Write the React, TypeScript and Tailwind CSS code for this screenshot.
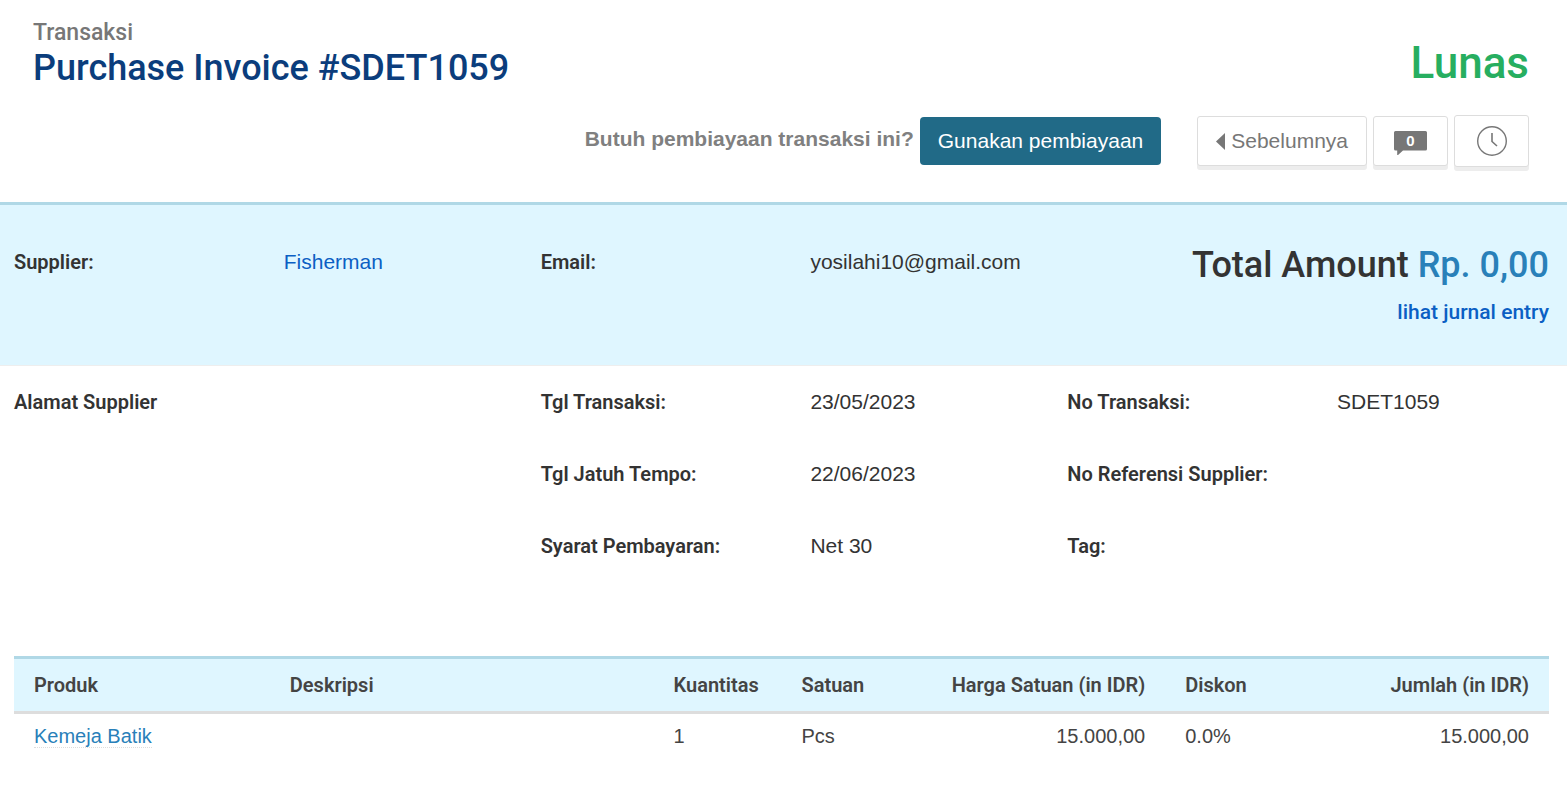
import type { ReactNode } from 'react'

const details = [
  [{ label: 'Alamat Supplier', value: '' }],
  [
    { label: 'Tgl Transaksi:', value: '23/05/2023' },
    { label: 'Tgl Jatuh Tempo:', value: '22/06/2023' },
    { label: 'Syarat Pembayaran:', value: 'Net 30' }
  ],
  [
    { label: 'No Transaksi:', value: 'SDET1059' },
    { label: 'No Referensi Supplier:', value: '' },
    { label: 'Tag:', value: '' }
  ]
]

const items = [
  {
    product: 'Kemeja Batik',
    description: '',
    quantity: '1',
    unit: 'Pcs',
    price: '15.000,00',
    discount: '0.0%',
    amount: '15.000,00'
  }
]

function Field({ label, children }: { label: string; children?: ReactNode }) {
  return (
    <div className="flex h-[72px] leading-[30px]">
      <dt className="w-[56%] shrink-0 font-['Roboto',sans-serif] text-[20px] font-semibold">{label}</dt>
      <dd className="whitespace-nowrap">{children}</dd>
    </div>
  )
}

function CommentIcon() {
  return (
    <svg width="33" height="28" viewBox="0 -4 33 28" fill="#777" aria-hidden="true">
      <path d="M1.5 0h30A1.5 1.5 0 0 1 33 1.5v16.5a1.5 1.5 0 0 1-1.5 1.5H9L4 24h-.8v-4.5H1.5A1.5 1.5 0 0 1 0 18V1.5A1.5 1.5 0 0 1 1.5 0Z" />
      <text
        x="16.5"
        y="15"
        textAnchor="middle"
        fill="#fff"
        fontSize="15"
        fontWeight="700"
        fontFamily="Liberation Sans, sans-serif"
      >
        0
      </text>
    </svg>
  )
}

function ClockIcon() {
  return (
    <svg width="30" height="30" viewBox="0 0 30 30" fill="none" stroke="#777" aria-hidden="true">
      <circle cx="15" cy="15" r="14.3" strokeWidth="1.4" />
      <path d="M15 7v8.5l5 4.5" strokeWidth="1.6" />
    </svg>
  )
}

const toolButton =
  'flex items-center justify-center rounded-[3px] border border-[#ddd] bg-white text-[#777] shadow-[0_4px_0_#ededed]'

export default function App() {
  return (
    <main className="font-['Liberation_Sans',Arial,sans-serif] text-[21px] text-[#333]">
      <header className="pt-5 pr-[38px] pb-[35px] pl-[33px]">
        <div className="flex items-start justify-between font-['Roboto',sans-serif] font-medium">
          <div>
            <p className="text-[23px] leading-[26px] text-[#777]">Transaksi</p>
            <h1 className="text-[36px] leading-[44px] text-[#0b3d7c]">Purchase Invoice #SDET1059</h1>
          </div>
          <p className="pt-4 text-[44px] leading-[54px] text-[#27ae60]">Lunas</p>
        </div>
        <div className="mt-[25px] flex items-center justify-end">
          <p className="mr-[6px] pb-1 font-bold text-[#808080]">Butuh pembiayaan transaksi ini?</p>
          <button type="button" className="h-12 rounded bg-[#216a87] px-[18px] text-white">
            Gunakan pembiayaan
          </button>
          <div className="ml-9 flex items-center gap-[6px]">
            <button type="button" className={`${toolButton} h-[50px] gap-[6px] px-[18px]`}>
              <svg width="9" height="17" viewBox="0 0 9 17" fill="#777" aria-hidden="true">
                <path d="M9 0v17L0 8.5Z" />
              </svg>
              Sebelumnya
            </button>
            <button type="button" aria-label="Komentar" className={`${toolButton} h-[50px] w-[75px]`}>
              <CommentIcon />
            </button>
            <button type="button" aria-label="Riwayat" className={`${toolButton} h-[52px] w-[75px]`}>
              <ClockIcon />
            </button>
          </div>
        </div>
      </header>

      <section className="border-t-3 border-b border-t-[#b0d8e6] border-b-[#eee] bg-[#dff6ff] pt-[42px] pr-[18px] pb-[38px] pl-[14px]">
        <div className="grid grid-cols-3 gap-x-[45px]">
          <dl>
            <Field label="Supplier:">
              <a href="#" className="text-[#0b5fc4]">Fisherman</a>
            </Field>
          </dl>
          <dl>
            <Field label="Email:">yosilahi10@gmail.com</Field>
          </dl>
          <div className="text-right font-['Roboto',sans-serif] font-medium">
            <h2 className="text-[36px] leading-[36px]">
              Total Amount <span className="text-[#2980b9]">Rp. 0,00</span>
            </h2>
            <a href="#" className="mt-[14px] block leading-[30px] text-[#0b5fc4]">lihat jurnal entry</a>
          </div>
        </div>
      </section>

      <section className="pt-[21px] pr-[18px] pl-[14px]">
        <div className="grid grid-cols-3 gap-x-[45px]">
          {details.map((column, index) => (
            <dl key={index}>
              {column.map((field) => (
                <Field key={field.label} label={field.label}>{field.value}</Field>
              ))}
            </dl>
          ))}
        </div>

        <table className="mt-[53px] w-full table-fixed text-left text-[20px] text-[#444]">
          <thead className="border-t-3 border-b-3 border-t-[#b0d8e6] border-b-[#ddd] bg-[#dff6ff] font-['Roboto',sans-serif]">
            <tr className="h-[55px] *:px-5 *:font-semibold *:whitespace-nowrap">
              <th className="w-2/12">Produk</th>
              <th className="w-3/12">Deskripsi</th>
              <th className="w-1/12">Kuantitas</th>
              <th className="w-1/12">Satuan</th>
              <th className="w-2/12 text-right">Harga Satuan (in IDR)</th>
              <th className="w-1/12">Diskon</th>
              <th className="w-2/12 text-right">Jumlah (in IDR)</th>
            </tr>
          </thead>
          <tbody>
            {items.map((item) => (
              <tr key={item.product} className="h-[45px] *:px-5">
                <td>
                  <a href="#" className="border-b border-dotted border-[#ddd] text-[#2980b9]">{item.product}</a>
                </td>
                <td>{item.description}</td>
                <td>{item.quantity}</td>
                <td>{item.unit}</td>
                <td className="text-right">{item.price}</td>
                <td>{item.discount}</td>
                <td className="text-right">{item.amount}</td>
              </tr>
            ))}
          </tbody>
        </table>
      </section>
    </main>
  )
}
